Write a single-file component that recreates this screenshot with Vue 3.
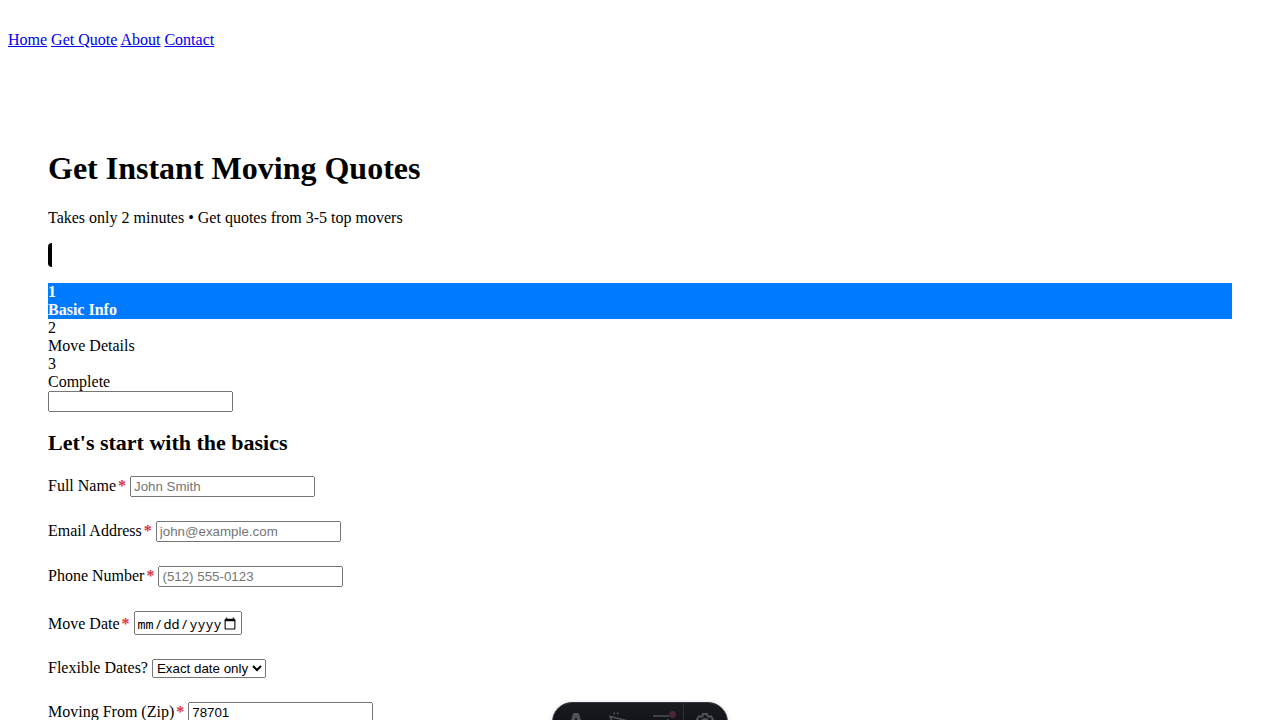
<script setup>
import { ref } from 'vue'

const links = ['Home', 'Get Quote', 'About', 'Contact']
const steps = ['Basic Info', 'Move Details', 'Complete']
const current = ref(0)
const fields = [
  { id: 'name', label: 'Full Name', type: 'text', placeholder: 'John Smith', required: true },
  { id: 'email', label: 'Email Address', type: 'email', placeholder: 'john@example.com', required: true },
  { id: 'phone', label: 'Phone Number', type: 'tel', placeholder: '(512) 555-0123', required: true },
  { id: 'date', label: 'Move Date', type: 'date', required: true },
  { id: 'flexible', label: 'Flexible Dates?', type: 'select', options: ['Exact date only'] },
  { id: 'from', label: 'Moving From (Zip)', type: 'text', value: '78701', required: true }
]
</script>

<template>
  <div class="page">
    <nav class="nav">
      <template v-for="link in links" :key="link"><a href="#">{{ link }}</a>{{ ' ' }}</template>
    </nav>
    <main class="main">
      <h1>Get Instant Moving Quotes</h1>
      <p>Takes only 2 minutes • Get quotes from 3-5 top movers</p>
      <div class="progress"></div>
      <div class="steps">
        <div v-for="(step, i) in steps" :key="step" :class="{ active: i === current }">
          <div>{{ i + 1 }}</div>
          <div>{{ step }}</div>
        </div>
      </div>
      <form>
        <input class="extra" type="text" aria-label="Additional information">
        <h2>Let's start with the basics</h2>
        <div v-for="f in fields" :key="f.id" class="field">
          <label :for="f.id">{{ f.label }}<span v-if="f.required" class="required">*</span></label>{{ ' ' }}
          <select v-if="f.type === 'select'" :id="f.id">
            <option v-for="o in f.options" :key="o">{{ o }}</option>
          </select>
          <input v-else :id="f.id" :type="f.type" :placeholder="f.placeholder" :value="f.value">
        </div>
      </form>
    </main>
    <div class="toolbar">
      <button type="button" aria-label="Menu">
        <svg viewBox="0 0 20 20" fill="currentColor"><path d="M8 1h4q.7 0 1 .8L17 15q-2.200-1.200-4.500-1.500L10.500 6q-.5-1.200-1 0L7.500 13.500Q5.200 13.800 3 15L7 1.800Q7.300 1 8 1Z"/></svg>
      </button>
      <button type="button" aria-label="Inspect">
        <svg viewBox="0 0 20 20" fill="none" stroke="currentColor" stroke-width="1.500"><path d="M1 4.500 17 8.500l-7 3L7.500 18Z"/><path d="M5.500 2.500 5 .5M8.500 2.500 9 .5"/></svg>
      </button>
      <button type="button" aria-label="Audit">
        <svg viewBox="0 0 20 20" fill="none" stroke="currentColor" stroke-width="1.500"><path d="M1 4h16M1 10h7M1 16h6M16 7v3M13 13l2 2 3-4"/></svg>
        <span class="badge"></span>
      </button>
      <span class="divider"></span>
      <button type="button" aria-label="Settings">
        <svg viewBox="0 0 20 20" fill="none" stroke="currentColor" stroke-width="2"><path d="M7 2h4l.5 2.200 1.500.8 2-.8 2 3.300L15.500 9v2l1.500 1.500-2 3.300-2-.8-1.500.8L11 18H7l-.5-2.200L5 15l-2 .8-2-3.300L2.500 11V9L1 7.500 3 4.200 5 5l1.500-.8Z"/><circle cx="9" cy="10" r="3"/></svg>
      </button>
    </div>
  </div>
</template>

<style>
body {
  margin: 0;
  background: #fff;
}
</style>

<style scoped>
.page {
  box-sizing: border-box;
  height: 100vh;
  overflow: hidden;
  padding: 31px 8px 0;
  color: #000;
  font: 16px/18px "Liberation Serif", serif;
}
.nav a {
  color: #0000ee;
  text-decoration: underline;
}
.main {
  padding: 101px 40px 0;
}
h1 {
  margin: 0 0 22px;
  font-size: 32px;
  line-height: 37px;
}
p {
  margin: 0 0 16px;
}
.progress {
  width: 4px;
  height: 24px;
  margin-bottom: 16px;
  border-radius: 4px 0 0 4px;
  background: #000;
}
.active {
  background: #007bff;
  color: #fff;
  font-weight: bold;
}
.extra {
  display: block;
}
h2 {
  margin: 18px 0 20px;
  font-size: 22px;
  line-height: 26px;
}
input,
select {
  margin: 0;
}
input[type="date"] {
  box-sizing: border-box;
  width: 108px;
  height: 24px;
  padding: 1px 1px 0;
  font-family: "Noto Sans Mono", monospace;
}
.field {
  margin-bottom: 24px;
}
.required {
  margin-left: 2px;
  color: #dc3545;
  font-weight: bold;
}
.toolbar {
  position: fixed;
  bottom: -22px;
  left: 50%;
  transform: translateX(-50%);
  box-sizing: border-box;
  display: flex;
  width: 176px;
  height: 40px;
  padding: 0 0 0 2px;
  overflow: hidden;
  border: 1px solid #343841;
  border-radius: 20px;
  background: linear-gradient(#191b22, #0d0e12);
  box-shadow: 0 0 4px rgba(0, 0, 0, .12);
}
.toolbar button {
  position: relative;
  flex: 1;
  display: flex;
  align-items: center;
  justify-content: center;
  padding: 0;
  border: 0;
  background: none;
  color: #505257;
}
.toolbar svg {
  width: 20px;
  height: 20px;
}
.divider {
  width: 1px;
  background: #2d3038;
}
.badge {
  position: absolute;
  top: 8px;
  right: 7px;
  width: 7px;
  height: 7px;
  border-radius: 50%;
  background: #4a2534;
}
</style>
